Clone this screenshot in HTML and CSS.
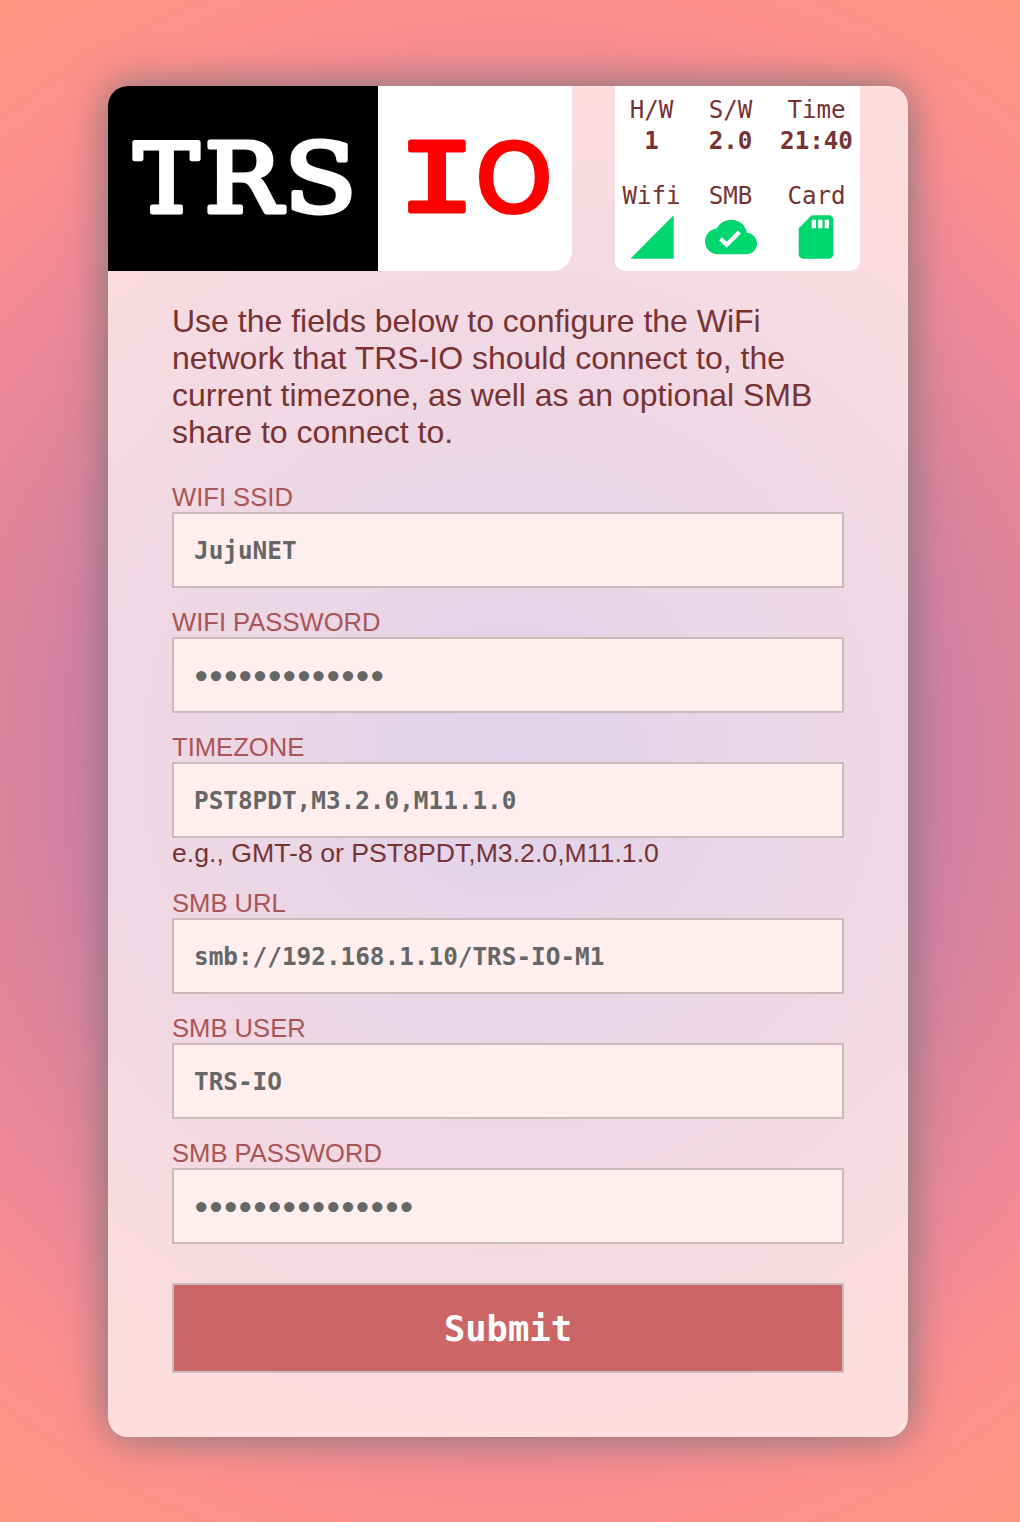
FILE: index.html
```html
<!DOCTYPE html>
<html lang="en">
<head>
<meta charset="utf-8">
<title>TRS-IO</title>
<link rel="stylesheet" href="styles.css">
</head>
<body>
<main class="panel">
  <header class="header">
    <div class="logo">
      <div class="logo-trs">
        <svg width="270" height="185" viewBox="0 0 270 185">
          <g class="logo-slab">
            <text transform="translate(58.5 125.5)" textLength="65" lengthAdjust="spacingAndGlyphs">T</text>
            <text transform="translate(135 125.5)" textLength="77" lengthAdjust="spacingAndGlyphs">R</text>
            <text transform="translate(212.5 126)" textLength="72" lengthAdjust="spacingAndGlyphs">S</text>
          </g>
        </svg>
      </div>
      <div class="logo-io">
        <svg width="194" height="185" viewBox="0 0 194 185">
          <text class="logo-i" transform="translate(59 125)" textLength="77" lengthAdjust="spacingAndGlyphs">I</text>
          <text class="logo-o" transform="translate(136 125.5)" textLength="77" lengthAdjust="spacingAndGlyphs">O</text>
        </svg>
      </div>
    </div>
    <div class="status">
      <div class="stat"><span>H/W</span><b>1</b></div>
      <div class="stat"><span>S/W</span><b>2.0</b></div>
      <div class="stat"><span>Time</span><b>21:40</b></div>
      <div class="stat"><span>Wifi</span><svg class="icon" viewBox="0 0 24 24"><path d="M2 22h20V2z"/></svg></div>
      <div class="stat"><span>SMB</span><svg class="icon" viewBox="0 0 24 24"><path d="M19.35 10.04A7.49 7.49 0 0 0 12 4C9.11 4 6.6 5.64 5.35 8.04A5.994 5.994 0 0 0 0 14c0 3.31 2.69 6 6 6h13c2.76 0 5-2.24 5-5 0-2.64-2.05-4.78-4.65-4.96zM10 17l-3.5-3.5 1.41-1.41L10 14.17 15.18 9l1.41 1.41L10 17z"/></svg></div>
      <div class="stat"><span>Card</span><svg class="icon icon-card" viewBox="0 0 24 24"><path d="M18 2h-8L4.02 8 4 20c0 1.1.9 2 2 2h12c1.1 0 2-.9 2-2V4c0-1.1-.9-2-2-2zm-6 6h-2V4h2v4zm3 0h-2V4h2v4zm3 0h-2V4h2v4z"/></svg></div>
    </div>
  </header>
  <form class="form">
    <p class="intro">Use the fields below to configure the WiFi network that TRS-IO should connect to, the current timezone, as well as an optional SMB share to connect to.</p>
    <div class="field"><label for="ssid">WIFI SSID</label><input id="ssid" type="text" value="JujuNET"></div>
    <div class="field"><label for="passwd">WIFI PASSWORD</label><input id="passwd" type="text" class="secret" value="•••••••••••••"></div>
    <div class="field"><label for="tz">TIMEZONE</label><input id="tz" type="text" value="PST8PDT,M3.2.0,M11.1.0"><div class="hint">e.g., GMT-8 or PST8PDT,M3.2.0,M11.1.0</div></div>
    <div class="field"><label for="url">SMB URL</label><input id="url" type="text" value="smb://192.168.1.10/TRS-IO-M1"></div>
    <div class="field"><label for="user">SMB USER</label><input id="user" type="text" value="TRS-IO"></div>
    <div class="field"><label for="smbpw">SMB PASSWORD</label><input id="smbpw" type="text" class="secret" value="•••••••••••••••"></div>
    <button class="submit" type="button">Submit</button>
  </form>
</main>
</body>
</html>
```
FILE: styles.css
```css
* { box-sizing: border-box; }
body {
  margin: 0;
  min-height: 1522px;
  padding: 86px 0 85px 108px;
  font-family: "Liberation Sans", Arial, sans-serif;
  color: #733;
  background: radial-gradient(circle at 50% 50%, #966bbb 0%, #ff8e8e 84%, #ff9580 100%);
}
.panel {
  width: 800px;
  height: 1351px;
  border-radius: 20px;
  overflow: hidden;
  background: rgba(255, 255, 255, .7);
  box-shadow: 0 0 40px #777;
}
.header { display: flex; height: 185px; }
.logo { display: flex; width: 464px; border-radius: 0 0 20px 0; overflow: hidden; }
.logo-trs { width: 270px; background: #000; }
.logo-io { width: 194px; background: #fff; }
.logo svg { display: block; }
.logo text { text-anchor: middle; stroke-linejoin: round; }
.logo-slab { font: 95px "DejaVu Serif", serif; fill: #fff; stroke: #fff; stroke-width: 5px; }
.logo-i { font: 104px "Liberation Mono", monospace; fill: #f00; stroke: #f00; stroke-width: 5px; }
.logo-o { font: 95px "DejaVu Sans", sans-serif; fill: #f00; stroke: #f00; stroke-width: 4px; }
.status {
  display: grid;
  grid-template-columns: 73px 85px 87px;
  grid-template-rows: 86px 99px;
  width: 245px;
  margin-left: 43px;
  background: #fff;
  border-radius: 0 0 10px 10px;
  font: 24.2px/31px "DejaVu Sans Mono", monospace;
}
.stat { display: flex; flex-direction: column; align-items: center; padding-top: 9px; }
.icon { width: 52px; height: 52px; margin-top: -1px; fill: #00d66f; }
.icon-card { margin-right: 2px; }
.form { padding: 32px 64px 0; }
.intro { margin: 0 0 30px; font-size: 32px; line-height: 37px; }
.field { margin-bottom: 18px; }
label { display: block; height: 31px; font-size: 25.6px; line-height: 33px; color: #a55; }
input {
  display: block;
  width: 672px;
  height: 76px;
  padding: 1px 20px 0;
  border: 2px solid #cbb;
  border-radius: 0;
  background: #fee;
  color: #666;
  font: bold 24.35px "DejaVu Sans Mono", monospace;
}
.secret { padding: 3px 18.6px 0; font-size: 29px; letter-spacing: -2.8px; }
.hint { height: 31px; font-size: 26.67px; line-height: 31px; }
.submit {
  display: block;
  width: 672px;
  height: 90px;
  margin-top: 39px;
  padding: 0;
  border: 2px solid #cbb;
  background: #c66;
  color: #fff;
  font: bold 35.5px "DejaVu Sans Mono", monospace;
}
```
